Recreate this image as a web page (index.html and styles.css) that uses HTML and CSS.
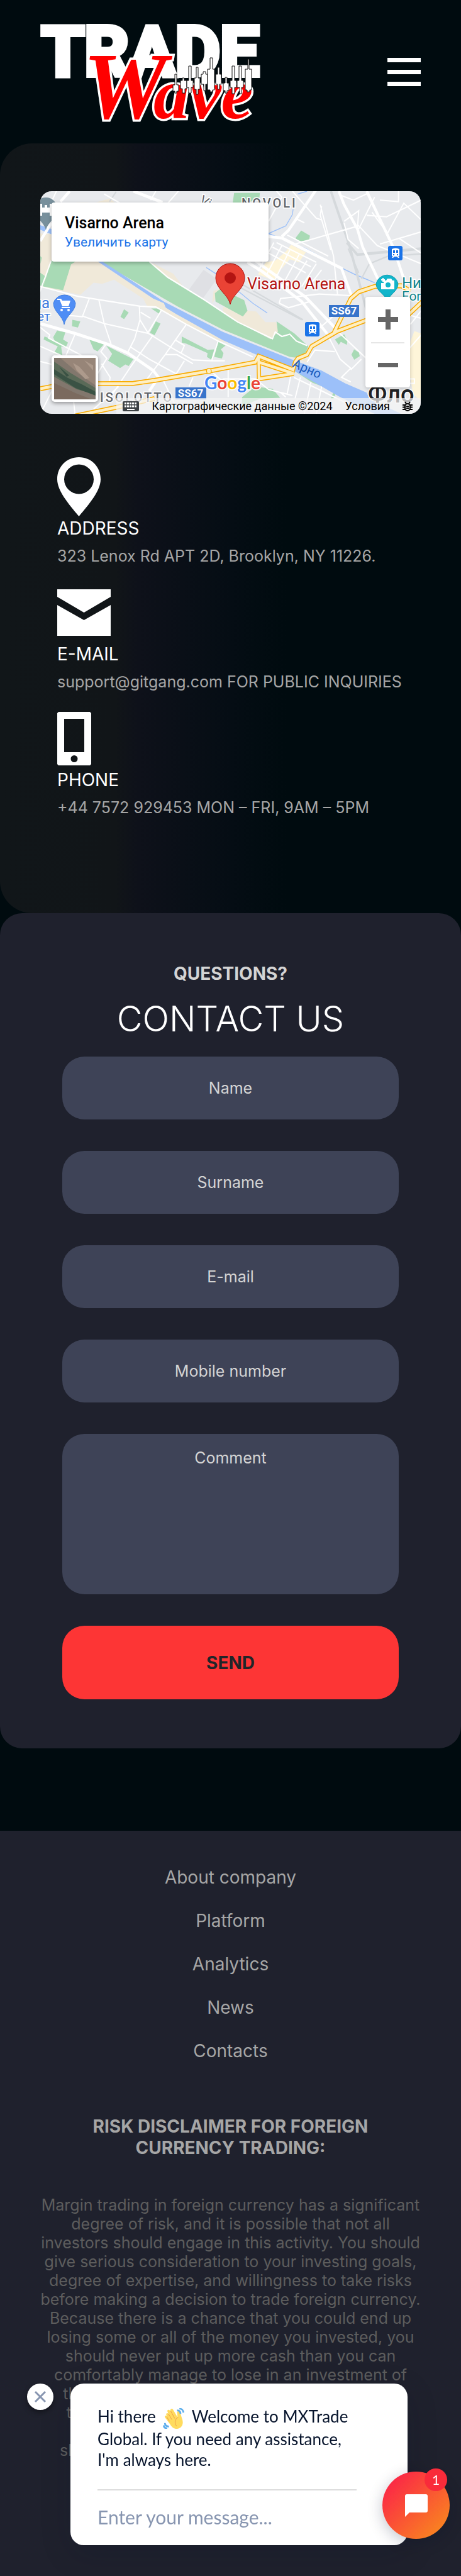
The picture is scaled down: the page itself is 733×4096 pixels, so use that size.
FILE: index.html
```
<!doctype html>
<html lang="en">
<head>
	<meta charset="utf-8">
	<meta name="viewport" content="width=device-width, initial-scale=1">
	<title>Trade Wave - Contacts</title>
	<link rel="stylesheet" href="styles.css">
</head>
<body>
	<header class="header">
		<a class="logo" href="#" aria-label="Trade Wave">
			<svg width="346" height="172" viewBox="0 0 346 172">
				<text class="logo-trade" x="2" y="92">TRADE</text>
				<text class="logo-wave" x="68" y="160"><tspan class="logo-w">W</tspan><tspan x="180">ave</tspan></text>
				<g fill="#fff" stroke="#111" stroke-width="1">
					<path d="M214 90h3v17h3v10h-3v3h-3v-3h-3v-10h3z"/>
					<path d="M226 96h3v4h4v13h-3v7h-4v-7h-3v-13h3z"/>
					<path d="M236 77h4v23h3v11h-3v9h-4v-9h-3v-11h3z"/>
					<path d="M248 79h3v17h3v18h-3v8h-3v-8h-3v-18h3z"/>
					<path d="M259 86h4v4h3v16h-3v10h-3v-10h-4v-16h3z"/>
					<path d="M270 64h4v18h3v33h-3v3h-4v-3h-4v-33h4z"/>
					<path d="M282 79h3v11h3v16h-3v8h-3v-8h-3v-16h3z"/>
					<path d="M294 95h3v9h3v12h-3v4h-3v-4h-3v-12h3z"/>
					<path d="M305 77h4v23h3v11h-3v10h-4v-10h-3v-11h3z"/>
					<path d="M316 77h4v23h3v11h-3v10h-3v-10h-4v-11h3z"/>
					<path d="M330 66h2v16h4v33h-3v3h-4v-3h-3v-33h4z"/>
				</g>
			</svg>
		</a>
		<button class="burger" type="button" aria-label="Menu"><span></span><span></span><span></span></button>
	</header>

	<section class="info">
		<div class="map">
			<svg class="map-canvas" viewBox="0 0 605 354" preserveAspectRatio="xMidYMid slice">
				<rect width="605" height="354" fill="#e8eaed"/>
				<g transform="translate(-16.4 -14.7) scale(.2108 .2409)" fill="none">
					<!-- sand -->
					<g fill="#f0e9d9">
						<path d="M78 340L162 345V500L520 520 1000 790 1600 1080 1430 1050 990 850 940 822H885L855 770 635 645 545 672 480 665 380 745 78 690z"/>
						<path d="M900 525L1080 605 1150 685 1000 620zM1456 825L1640 850 1706 855 1776 925H1856L1886 990 1816 1035 1456 870zM1375 800L1385 720 1440 700 1500 730 1400 770zM500 135L600 110 640 135zM350 135h90l-40 25z"/>
						<path d="M1950 1150L2010 1160 2120 1175 2080 1190z"/>
					</g>
					<path fill="#fef5d9" d="M1970 415L2080 465 2030 530 1960 510 1870 600 1840 650 1720 610 1780 530 1850 520 1930 460zM2900 985L2951 1000V1450L2890 1400 2860 1250 2870 1050z"/>
					<path fill="#dfe0e4" d="M1310 580L1410 640 1300 775 1200 710z"/>
					<!-- parks -->
					<g fill="#a8dab5">
						<path d="M162 520L345 525 310 545 250 715 100 690zM78 490L90 500 80 540zM78 600L120 625 100 690 78 685z"/>
						<path d="M525 525H900L1040 630 1310 775 1568 925 1816 1038 1870 990 1860 920 1995 1000 2100 1085 2060 1165 1960 1155 1456 975 1120 825z"/>
						<path d="M1395 735L1430 710 1556 755 1616 780 1641 850 1606 888 1400 790z"/>
						<path d="M710 840L745 862 710 906 683 890zM320 910L380 920 362 961 317 952zM915 835H985L975 870zM950 920L985 935 940 1012 905 995zM205 980L267 993 250 1040 287 1060 270 1092 235 1085 245 1144 180 1130 210 1085 103 1040 110 1020 185 1045 175 1025z"/>
						<path d="M445 1033L558 1072 510 1118 480 1105zM575 1080L780 1170 745 1215 720 1205 680 1228 590 1180 620 1135zM1145 1020L1340 1108 1390 1105 1368 1173 1335 1155 1340 1130 1180 1068 1145 1060zM1420 1055L1475 1080 1440 1105 1460 1130 1448 1165 1390 1155z"/>
						<path d="M2046 320L2112 355 2105 385 2025 392 2003 370zM1540 72H1735L1730 110 1600 150 1530 135zM2300 1040L2370 1005 2395 1050 2390 1075 2345 1055 2330 1075zM2445 1105L2480 1125 2488 1150 2446 1173 2425 1140zM2000 1250L2270 1355 2250 1365 2130 1325zM1600 1420L1700 1350 1830 1365 1887 1425 1740 1430 1600 1480zM2270 1430L2290 1385 2310 1390 2290 1430z"/>
					</g>
					<!-- river -->
					<path fill="#9cc0f9" d="M510 524H545L950 755 1010 790 1456 990 1956 1165 2200 1245 2380 1330 2540 1390 2560 1430 2800 1530H2600L2330 1415 2000 1250 1456 1045 1100 870 1025 830 1010 800 930 770zM78 285L162 310V345L78 315z"/>
					<path stroke="#9cc0f9" stroke-width="6" d="M1800 340L1930 290 1980 215 1985 180M1800 340L2080 440 2310 550 2450 610 2600 665M1570 720L1680 800 1790 865M2020 80L2090 61M1330 565L1410 610"/>
					<!-- railway -->
					<g stroke="#d5d9dc" stroke-width="10">
						<path stroke-width="18" d="M2270 61L2410 420 2540 850M2390 400L2470 480 2951 440"/>
						<path d="M2951 475L2700 490 2560 540 2500 640M2400 440L2480 600M1570 690L2050 910M1590 670L2060 910M600 130L650 65"/>
					</g>
					<!-- streets -->
					<g stroke="#fff" stroke-width="9">
						<path stroke-width="20" d="M78 935L340 1000 600 1075 740 1130 930 1245 970 1290 900 1380M1800 360L1900 370 2350 570 2425 750M1900 360L1950 320 2160 50M2330 61L2370 150 2470 310 2510 430 2630 650M2540 61L2740 430 2820 640M78 390L162 270M230 130L300 61M780 61L1000 135M1640 530L1750 590 2050 790 2240 1000M1700 520L2080 760 2320 980"/>
						<path d="M78 690L360 755 830 820 950 825 1180 940 1420 1050 1680 1155M900 525L1040 630 1310 775 1568 925 1830 1035 1850 990 1900 1020 1960 1005 2010 1050 2090 1080"/>
						<path d="M160 520L60 760M450 765L395 890 280 880M395 885L560 935 895 1000 1060 1090 1230 1175 1370 1180 1470 1180M520 780L560 935 612 1070M825 820L830 910 790 1035 740 1120M830 910L890 995 990 850M835 860L910 900M930 1010L760 1220 600 1430M1180 940L1020 1140 850 1340M1020 1140H1110L1230 1200M1420 1050L1370 1180M1100 1045L1165 1080 1140 1130M760 1090L900 1170 1110 1270M1165 1180L1080 1300M78 960L150 1010 140 1030 400 1150M340 1005L260 1170M78 1085L380 1200M570 1075L535 1120 580 1165 500 1280M540 1200L605 1290 600 1320M78 1185L170 1205M165 1380L80 1530M670 1350L480 1500M1000 1300L1100 1480M1230 1290L1200 1350M1380 1260L1500 1350M1495 1240V1420M330 1450L340 1530M200 61L130 190M1120 61L1030 150M950 61L910 120M560 80L700 150"/>
						<path d="M1980 61L2160 240 2200 250M2190 150L2290 490 2320 740M2200 160L2190 220 2270 450M1940 350L2250 490M2000 240L2070 270M1860 61L1900 100 1800 260M2000 410L2480 290M2350 90L2440 120 2560 70M2370 260L2480 190 2470 310M2470 280L2620 420 2951 540M2480 310L2600 100M2540 220L2690 230 2951 120M2690 330L2580 200M2690 350L2820 140 2951 250M2780 61V130L2640 120M2370 270L2400 380 2480 440M2640 410L2951 330M2780 370L2951 470"/>
						<path d="M1800 470L2080 600M1830 430L2120 560M1860 400L2160 530M1840 400L1720 590M1900 420L1780 620M1960 450L1840 660M2030 480L1900 690M2090 520L1960 700M2160 540L2050 690M2200 580L2130 660M1880 800L1890 770 2180 740 2420 750M1880 800L1950 830 2110 790M2110 1020L2350 840M2240 1000L2340 1170 2420 1230 2350 1290 2420 1320M2320 985L2580 1200M2420 1240L2500 1170M2300 1120L2150 1110 2090 1190M1970 1270L1940 1400 1890 1390 1930 1420M1990 1290L2180 1370 2480 1500M2040 1290L2000 1430M2120 1320L2070 1530M2200 1350L2160 1530M1456 1300L1700 1300 1800 1370 1980 1410M2860 1100L2951 1010M2870 940L2951 850M2780 860L2951 900M2860 1330H2900V1300H2860"/>
					</g>
					<!-- highways -->
					<path stroke="#f9ab00" stroke-width="32" d="M78 1365L165 1350 500 1332 780 1330 940 1310 1340 1250 1568 1212 1700 1190 1725 1150 1985 1240 2000 1190 2020 1165 2090 1140 2125 1085 2320 985 2560 905M2290 1000L2420 770 2480 725 2600 690 2800 685 2870 720M1725 1150L1728 1300 1990 1265 1728 1190M340 1545L640 1490 940 1430M2960 790L2850 880"/>
					<path stroke="#feefc3" stroke-width="19" d="M78 1365L165 1350 500 1332 780 1330 940 1310 1340 1250 1568 1212 1700 1190 1725 1150 1985 1240 2000 1190 2020 1165 2090 1140 2125 1085 2320 985 2560 905M2290 1000L2420 770 2480 725 2600 690 2800 685 2870 720M1725 1150L1728 1300 1990 1265 1728 1190M340 1545L640 1490 940 1430M2960 790L2850 880"/>
					<circle cx="1350" cy="1248" r="18" fill="#feefc3" stroke="#f9ab00" stroke-width="6"/>
				</g>

				<!-- markers -->
				<path fill="#78909c" d="M9 62C7 50-9 43-9 28a18 18 0 0 1 36 0C27 43 11 50 9 62z"/>
				<path fill="#fff" d="M0 20h3v6h4v-4h4v4h4v-6h3v19h-3v-5H3v5H0z"/>
				<path fill="#4f8df5" stroke="#3f7de0" d="M38 212C36 198 21 192 21 178a18 17 0 0 1 35 0C56 192 40 198 38 212z"/>
				<path fill="#fff" d="M27 171h6l2 3h13l-3 9H35l-4-10h-4zM34 184h13v2H34z"/>
				<circle cx="34" cy="189" r="2" fill="#fff"/><circle cx="45" cy="189" r="2" fill="#fff"/>
				<path fill="#12b5cb" stroke="#129eaf" d="M552 176C550 164 534 160 534 147a18 18 0 0 1 35 0C569 160 554 164 552 176z"/>
				<path fill="#fff" d="M546 142h4l2-3h6l2 3h3v14h-21v-10h4zM542 140h2v-2h2v2h2v2h-2v2h-2v-2h-2z"/>
				<circle cx="553" cy="149" r="4" fill="#12b5cb"/>
				<path fill="#ea4335" stroke="#b31412" d="M302 180C299 164 279 156 279 138a23 23 0 0 1 46 0C325 156 305 164 302 180z"/>
				<circle cx="302" cy="138" r="9" fill="#b31412"/>
				<g id="train">
					<rect x="553" y="87" width="23" height="23" rx="3" fill="#1a73e8"/>
					<path fill="#fff" d="M559 92q6-3 12 0v11l-2 1 2 2h-2l-2-2h-4l-2 2h-2l2-2-2-1z"/>
					<path fill="#1a73e8" d="M561 94h3v4h-3zM566 94h3v4h-3zM561 100h2v2h-2zM567 100h2v2h-2z"/>
				</g>
				<use href="#train" x="-132" y="121"/>
				<rect x="459" y="181" width="48" height="19" fill="#3874cb"/>
				<rect x="215" y="312" width="49" height="19" fill="#3874cb"/>

				<g class="map-text">
					<text class="road" x="483" y="196">SS67</text>
					<text class="road" x="239" y="327">SS67</text>
					<text class="place" x="329" y="156">Visarno Arena</text>
					<text class="teal" x="575" y="154">Ни</text>
					<text class="teal small" x="575" y="174">Fort</text>
					<text class="blue" x="15" y="186">ga</text>
					<text class="blue small" x="16" y="206">ет</text>
					<text class="district" x="95" y="335">ISOLOTTO</text>
					<text class="district" x="320" y="26">NOVOLI</text>
					<text class="street" x="252" y="18" transform="rotate(30 252 18)">Via</text>
					<text class="water" x="400" y="279" transform="rotate(24 400 279)">Арно</text>
					<text class="city" x="521" y="336">Фло</text>
					<text class="google" x="261" y="315"><tspan fill="#4285f4">G</tspan><tspan fill="#ea4335">o</tspan><tspan fill="#fbbc04">o</tspan><tspan fill="#4285f4">g</tspan><tspan fill="#34a853">l</tspan><tspan fill="#ea4335">e</tspan></text>
				</g>
			</svg>
			<div class="map-card">
				<strong>Visarno Arena</strong>
				<a href="#">Увеличить карту</a>
			</div>
			<button class="map-view" type="button" aria-label="Satellite">
				<svg width="66" height="66" viewBox="0 0 66 66">
					<rect width="66" height="66" fill="#82776d"/>
					<path fill="#978578" d="M10 0H66V44L38 24z"/>
					<path fill="#ad9a8c" d="M30 8l10 6 16 18-6 2-14-14zM48 4l14 8v8z"/>
					<path fill="#5a6a58" d="M0 6L26 24 66 48V58L36 50 0 30z"/>
					<path fill="#3a5244" d="M0 18L22 32 44 42 66 54V60L34 48 0 26zM8 14l16 14-4 2z"/>
					<path fill="#7b6a5e" d="M0 40L34 56 60 66H0z"/>
				</svg>
			</button>
			<div class="map-zoom">
				<button type="button" aria-label="Zoom in"><svg width="32" height="32" viewBox="0 0 32 32"><path fill="#666" d="M12 0h8v12h12v8H20v12h-8V20H0v-8h12z"/></svg></button>
				<button type="button" aria-label="Zoom out"><svg width="32" height="32" viewBox="0 0 32 32"><path fill="#666" d="M0 12h32v7H0z"/></svg></button>
			</div>
			<div class="map-bar">
				<svg width="26" height="16" viewBox="0 0 26 16"><rect width="26" height="16" rx="2" fill="#3c4043"/><path stroke="#fff" stroke-width="3" stroke-dasharray="3 1" d="M3 3.5h20M3 8h20"/><path stroke="#fff" stroke-width="2" d="M7 13h12"/></svg>
				<span>Картографические данные ©2024</span>
				<a href="#">Условия</a>
				<svg width="16" height="16" viewBox="0 0 16 16" fill="none" stroke="#000" stroke-width="2"><rect x="4" y="4" width="8" height="11" rx="4"/><path d="M0 6h4M0 9.500h4M0 13h4M12 6h4M12 9.500h4M12 13h4M4 1l2 3M12 1l-2 3M6 8h4M6 11h4"/></svg>
			</div>
		</div>

		<ul class="contacts">
			<li>
				<div class="icon"><svg width="69" height="94" viewBox="0 0 69 94"><path fill="#fff" fill-rule="evenodd" d="M34.500 0C15 0 0 15 0 35c0 18 17 38 34.500 59C52 73 69 53 69 35 69 15 54 0 34.500 0zm0 11.500a23.500 23.500 0 1 1 0 47 23.500 23.500 0 0 1 0-47z"/></svg></div>
				<h2>ADDRESS</h2>
				<p>323 Lenox Rd APT 2D, Brooklyn, NY 11226.</p>
			</li>
			<li>
				<div class="icon"><svg width="85" height="74" viewBox="0 0 85 74"><path fill="#fff" d="M0 0h85v12L42.500 37 0 12zM0 25l42.500 24L85 25v49H0z"/></svg></div>
				<h2>E-MAIL</h2>
				<p>support@gitgang.com FOR PUBLIC INQUIRIES</p>
			</li>
			<li>
				<div class="icon"><svg width="54" height="85" viewBox="0 0 54 85"><path fill="#fff" fill-rule="evenodd" d="M2 0h50l2 2v81l-2 2H2l-2-2V2zM11 11v53h32V11zM27 69a5 5 0 1 0 0 11 5 5 0 0 0 0-11z"/></svg></div>
				<h2>PHONE</h2>
				<p>+44 7572 929453 MON – FRI, 9AM – 5PM</p>
			</li>
		</ul>
	</section>

	<section class="feedback">
		<h4>QUESTIONS?</h4>
		<h1>CONTACT US</h1>
		<form class="form">
			<input type="text" placeholder="Name" aria-label="Name">
			<input type="text" placeholder="Surname" aria-label="Surname">
			<input type="email" placeholder="E-mail" aria-label="E-mail">
			<input type="tel" placeholder="Mobile number" aria-label="Mobile number">
			<textarea placeholder="Comment" aria-label="Comment"></textarea>
			<button type="submit">SEND</button>
		</form>
	</section>

	<footer class="footer">
		<nav>
			<a href="#">About company</a>
			<a href="#">Platform</a>
			<a href="#">Analytics</a>
			<a href="#">News</a>
			<a href="#">Contacts</a>
		</nav>
		<h3>RISK DISCLAIMER FOR FOREIGN CURRENCY TRADING:</h3>
		<p>Margin trading in foreign currency has a significant degree of risk, and it is possible that not all investors should engage in this activity. You should give serious consideration to your investing goals, degree of expertise, and willingness to take risks before making a decision to trade foreign currency. Because there is a chance that you could end up losing some or all of the money you invested, you should never put up more cash than you can comfortably manage to lose in an investment of<br>this kind. You should be aware of all the risks<br>that come with trading in a foreign currency,<br>and if you have any doubts about it, you<br>should speak with an independent consultant.</p>
	</footer>

	<div class="chat">
		<button class="chat-close" type="button" aria-label="Close"><svg width="20" height="20" viewBox="0 0 20 20"><path stroke="#8795b0" stroke-width="3" d="M2 2l16 16M18 2L2 18"/></svg></button>
		<div class="chat-box">
			<p>Hi there <svg class="wave" width="36" height="36" viewBox="0 0 36 36"><path fill="#ffdb5e" d="M5 10c2-2 3-1 4 0L7 5c1-3 4-2 5 0l1-3c2-2 4 0 5 2l7 12-1-9c1-3 4-2 5 0l4 12c3 9-1 16-9 17-6 0-9-3-12-8L3 16c-1-3 1-4 3-2z"/><path fill="none" stroke="#ee9547" d="M9 10l6 10M13 5l7 13M6 15l5 8M23 31c-4-6-3-12 3-15"/><path fill="none" stroke="#5dadec" stroke-width="3" d="M24 4c4 0 6 2 6 6M28 1c5 0 7 4 7 7M3 26c0 4 3 6 7 6M1 30c0 3 2 5 6 5"/></svg> Welcome to MXTrade Global. If you need any assistance, I'm always here.</p>
			<input type="text" placeholder="Enter your message..." aria-label="Enter your message">
		</div>
		<button class="chat-open" type="button" aria-label="Open chat">
			<svg width="36" height="36" viewBox="0 0 36 36"><path fill="#fff" d="M3 0h30q3 0 3 3v23q0 3-3 3H7l-7 7V3q0-3 3-3z"/></svg>
			<span class="badge">1</span>
		</button>
	</div>
</body>
</html>
```
FILE: styles.css
```
*{
	margin:0;
	padding:0;
	box-sizing:border-box;
}
body{
	background:#000b0f;
	color:#fff;
	font-family:Inter, sans-serif;
	font-size:25px;
	line-height:30px;
	min-height:100vh;
	display:flex;
	flex-direction:column;
}
button,input,textarea{
	font:inherit;
	border:0;
	outline:none;
}
button{
	cursor:pointer;
}
a{
	text-decoration:none;
}
svg{
	display:block;
}

/* header */
.header{
	display:flex;
	justify-content:space-between;
	align-items:center;
	padding:28px 64px;
}
.logo svg{
	overflow:visible;
}
.logo-trade{
	font-family:Roboto, sans-serif;
	font-weight:bold;
	font-size:110px;
	fill:#fff;
	stroke:#fff;
	stroke-width:8px;
}
.logo-wave{
	font-family:"Liberation Serif", serif;
	font-style:italic;
	font-weight:bold;
	font-size:114px;
	fill:#f00;
	stroke:#fff;
	stroke-width:7px;
	paint-order:stroke;
}
.logo-w{
	font-size:150px;
}
.burger{
	width:53px;
	background:none;
	display:flex;
	flex-direction:column;
	gap:12px;
}
.burger span{
	height:7px;
	background:#fff;
}

/* map + contacts */
.info{
	padding:76px 64px 125px;
	border-radius:51px;
	background:linear-gradient(90deg, #111619 0, #111518 25%, #0e111a 30%, #050d14 50%, #000b0f 62%);
}
.map{
	position:relative;
	height:354px;
	border-radius:18px;
	overflow:hidden;
	font-family:Roboto, sans-serif;
}
.map-canvas{
	width:100%;
	height:100%;
}
.map-text text{
	font-size:24px;
	stroke:#fff;
	stroke-width:3px;
	paint-order:stroke;
}
.map-text .road{
	font-size:17px;
	font-weight:bold;
	fill:#fff;
	stroke:none;
	text-anchor:middle;
}
.map-text .place{
	font-size:25px;
	fill:#b31412;
}
.map-text .teal{
	fill:#12858d;
}
.map-text .blue{
	fill:#3f7de0;
	text-anchor:end;
}
.map-text .small{
	font-size:21px;
}
.map-text .district{
	font-size:20px;
	font-weight:500;
	letter-spacing:3px;
	fill:#5f6368;
}
.map-text .street{
	font-size:20px;
	fill:#5f6368;
}
.map-text .water{
	font-size:20px;
	fill:#185abc;
	stroke:none;
}
.map-text .city{
	font-size:38px;
	font-weight:500;
	fill:#202124;
}
.map-text .google{
	font-family:Lato, sans-serif;
	font-size:28px;
	font-weight:bold;
}
.map-card{
	position:absolute;
	left:18px;
	top:18px;
	width:345px;
	height:94px;
	padding:18px 21px;
	background:#fff;
	border-radius:4px;
	box-shadow:0 2px 6px rgba(0,0,0,.3);
	color:#000;
	display:flex;
	flex-direction:column;
}
.map-card strong{
	font-size:25px;
	font-weight:500;
}
.map-card a{
	font-size:21px;
	color:#1a73e8;
}
.map-view{
	position:absolute;
	left:18px;
	bottom:19px;
	border:4px solid #fff;
	border-radius:5px;
	box-shadow:0 2px 6px rgba(0,0,0,.4);
}
.map-zoom{
	position:absolute;
	right:17px;
	top:168px;
	width:71px;
	background:#fff;
	border-radius:4px;
	box-shadow:0 2px 6px rgba(0,0,0,.2);
	padding:0 9px;
}
.map-zoom button{
	display:flex;
	justify-content:center;
	align-items:center;
	width:100%;
	height:72px;
	background:none;
}
.map-zoom button + button{
	border-top:2px solid #e6e6e6;
}
.map-bar{
	position:absolute;
	right:0;
	bottom:0;
	height:25px;
	padding:0 13px 0 10px;
	background:rgba(245,245,245,.7);
	color:#000;
	font-size:18px;
	line-height:25px;
	display:flex;
	align-items:center;
	gap:20px;
}
.map-bar a{
	color:#000;
}
.contacts{
	list-style:none;
	padding:69px 0 0 27px;
}
.contacts li{
	margin-bottom:28px;
}
.contacts .icon{
	height:94px;
	display:flex;
	align-items:center;
}
.contacts h2{
	font-size:28px;
	font-weight:400;
	line-height:34px;
	margin:2px 0 12px;
}
.contacts p{
	color:#a6a6a6;
}

/* form */
.feedback{
	padding:79px 99px 78px;
	border-radius:35px;
	background:#1f212d;
	text-align:center;
}
.feedback h4{
	font-size:28px;
	line-height:34px;
	color:#d4d4d4;
}
.feedback h1{
	font-size:56px;
	font-weight:300;
	line-height:68px;
	margin:21px 0 26px;
}
.form{
	display:flex;
	flex-direction:column;
	gap:50px;
}
.form input,.form textarea{
	width:100%;
	height:100px;
	padding:0 30px;
	border-radius:35px;
	background:#3e4357;
	color:#d4d4d4;
	text-align:center;
}
.form textarea{
	height:255px;
	padding:23px 30px;
	resize:none;
	overflow:hidden;
}
.form ::placeholder{
	color:#d4d4d4;
	opacity:1;
}
.form button{
	height:117px;
	border-radius:35px;
	background:#fd3535;
	color:#212529;
	font-size:28px;
	font-weight:bold;
}

/* footer */
.footer{
	flex:1;
	margin-top:131px;
	padding:57px 64px 0;
	background:#1f212d;
	color:#a6a6a6;
	text-align:center;
}
.footer nav{
	display:flex;
	flex-direction:column;
	align-items:center;
	gap:35px;
}
.footer nav a{
	font-size:28px;
	line-height:34px;
	color:#a6a6a6;
}
.footer h3{
	font-size:28px;
	line-height:34px;
	padding:0 60px;
	margin:86px 0 59px;
}
.footer p{
	color:#5d5d5d;
}

/* chat widget */
.chat{
	position:fixed;
	left:43px;
	right:85px;
	bottom:49px;
	display:flex;
	align-items:flex-start;
	gap:27px;
	font-family:Lato, sans-serif;
}
.chat-close{
	width:42px;
	height:42px;
	border-radius:50%;
	background:#fff;
	box-shadow:0 4px 8px rgba(0,0,0,.4);
	display:flex;
	justify-content:center;
	align-items:center;
}
.chat-box{
	flex:1;
	height:257px;
	padding:36px 81px 0 43px;
	background:#fff;
	border-radius:21px;
	box-shadow:0 14px 50px rgba(0,18,46,.16);
}
.chat-box p{
	color:#06132b;
	font-size:26px;
	line-height:33px;
	padding-bottom:30px;
	border-bottom:2px solid #ddd;
}
.wave{
	display:inline-block;
	vertical-align:middle;
	height:33px;
	margin:0 4px;
}
.chat-box input{
	width:100%;
	height:84px;
	font-size:30px;
	background:none;
}
.chat-box ::placeholder{
	color:#8795b0;
	opacity:1;
}
.chat-open{
	position:absolute;
	right:-67px;
	bottom:10px;
	width:107px;
	height:107px;
	border-radius:50%;
	background:linear-gradient(135deg, #fb2a45 15%, #f97f22 85%);
	box-shadow:0 6px 24px rgba(0,18,46,.24);
	display:flex;
	justify-content:center;
	align-items:center;
}
.badge{
	position:absolute;
	right:4px;
	top:-5px;
	width:36px;
	height:36px;
	border-radius:50%;
	background:#f92b3a;
	color:#fff;
	font-size:21px;
	line-height:36px;
}
```
